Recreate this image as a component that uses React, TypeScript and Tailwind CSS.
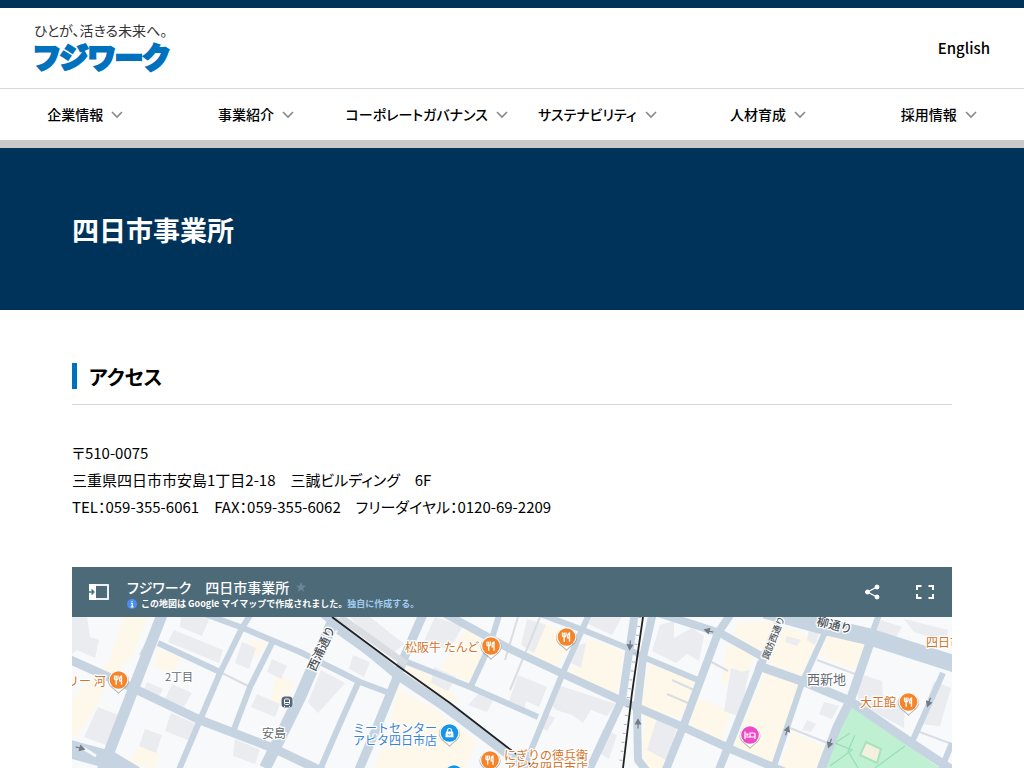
import type { ReactNode } from "react";

const navItems = ["企業情報", "事業紹介", "コーポレートガバナンス", "サステナビリティ", "人材育成", "採用情報"];

const majorRoads = [
  { d: "M335 617L300 697L265 768", w: 12 },
  { d: "M163 612L133 690L108 755L95 790", w: 11 },
  { d: "M66 748L110 760L135 775", w: 18 },
  { d: "M66 658L133 688L200 720L273 748L330 775", w: 9 },
  { d: "M320 610L398 675L443 705L530 770", w: 10 },
  { d: "M424 612L403 660L396 680L377 727L358 772", w: 9 },
  { d: "M765 610L827 627L870 637L955 664", w: 17 },
  { d: "M442 612L510 649L563 674L620 700L683 727L735 751L790 774", w: 8 },
  { d: "M783 612L760 667L733 735L718 772", w: 8 },
  { d: "M655 612L720 633L763 657", w: 8 },
  { d: "M756 665L807 683L850 701L910 742L955 772", w: 9 },
  { d: "M872 637L850 701L837 727L820 772", w: 9 },
  { d: "M732 612L718 633L683 727L665 772", w: 8 },
  { d: "M635 612L622 700L588 772", w: 8 },
  { d: "M653 612L643 657L637 710L638 760L650 775", w: 8 },
];

const minorRoads = [
  "M158 643L220 672",
  "M252 612L242 628L220 673L200 720L178 772",
  "M205 614L243 628L300 652L360 682L392 694",
  "M273 641L250 687L233 732",
  "M407 662L470 687L538 717",
  "M500 612L490 645L471 686",
  "M358 683L338 728L319 772",
  "M535 612L583 630L627 648L643 657L698 680",
  "M590 612L562 675L525 765",
  "M827 628L802 683L772 772",
  "M943 673L912 742",
  "M880 612L871 636",
  "M952 743L940 772",
  "M338 631L397 673",
];

const buildings = [
  "M72 617H87L90 637L99 640L95 658L77 650L72 654Z",
  "M174 630L223 650L219 663L168 642Z",
  "M181 617H210L202 636L180 627Z",
  "M147 682L163 689L158 698L143 691Z",
  "M172 684L192 693L184 707L165 699Z",
  "M171 713L196 724L190 741L165 731Z",
  "M145 729L162 735L156 753L139 746Z",
  "M98 707L126 718L109 746L84 737Z",
  "M242 642L256 648L249 669L235 663Z",
  "M257 694L280 704L275 717L251 707Z",
  "M272 659L287 666L281 679L267 672Z",
  "M235 739L260 750L255 764L233 756Z",
  "M321 670L345 683L330 700L318 713L308 702Z",
  "M353 655L370 662L364 677L349 669Z",
  "M350 617H370L404 644L391 655L372 641Z",
  "M435 617L463 626L449 650L424 641Z",
  "M434 667L456 677L448 691L431 683Z",
  "M480 692L495 697L487 712L468 705Z",
  "M527 619L546 625L534 653L521 645Z",
  "M518 675L547 687L539 707L526 701L524 711L508 704Z",
  "M555 684L616 704L607 716L591 710L583 723L572 715L556 710L549 702Z",
  "M591 617H622L612 635L588 624Z",
  "M577 645L586 643L581 668L571 663Z",
  "M544 712L555 718L547 731L539 726Z",
  "M603 729L617 735L609 759L594 750Z",
  "M660 625L674 621L674 638L692 628L704 636L699 661L687 654L676 663L652 651Z",
  "M731 668L748 674L741 717L724 711Z",
  "M657 718L677 727L668 761L647 750Z",
  "M787 636L801 640L797 646L785 642Z",
  "M810 625L821 629L815 645L807 640Z",
  "M864 675L882 681L883 695L905 702L904 728L859 704L857 691Z",
  "M881 620L902 627L896 637L871 630Z",
  "M904 619L948 630L947 642L914 632Z",
  "M807 720L816 724L811 732L802 730Z",
  "M824 702L839 706L832 719L819 714Z",
  "M934 681L951 688L940 726L919 724Z",
  "M730 674L750 670L739 705L730 713Z",
];

const yellowLots = [
  "M123 617L148 617L132 657L106 680L100 701L78 735L72 735L72 700L109 661Z",
  "M155 648L181 657L174 674L155 667Z",
  "M250 640L267 642L257 658L248 653Z",
  "M276 674L295 682L284 708L271 700Z",
  "M137 746L160 754L155 768L128 764Z",
  "M407 665L443 682L461 703L438 700L405 679Z",
  "M397 688L430 706L477 741L465 768L373 768L389 736Z",
  "M470 622L488 649L469 682L440 669Z",
  "M535 620L578 636L556 668L527 652Z",
  "M588 638L624 651L616 696L569 672Z",
  "M648 663L697 681L680 719L641 706Z",
  "M645 715L679 728L672 768H645L642 748Z",
  "M728 641L756 656L738 689L721 680Z",
  "M692 695L730 711L721 743L690 727Z",
  "M736 623L777 621L762 651L733 640Z",
  "M783 627L818 638L801 676L767 664Z",
  "M765 672L801 686L773 763L733 748Z",
  "M829 632L865 642L856 670L820 656Z",
  "M792 732L828 748L819 768H780Z",
];

function Chevron() {
  return (
    <svg className="h-2 w-3 shrink-0" viewBox="0 0 12 8" fill="none" stroke="#888" strokeWidth="1.6" aria-hidden="true">
      <path d="M1 1l5 5L11 1" />
    </svg>
  );
}

function Pin({ x, y, color, children }: { x: number; y: number; color: string; children: ReactNode }) {
  return (
    <g transform={`translate(${x} ${y})`}>
      <path d="M-10.5 1A10.5 10.5 0 1 1 10.5 1C10.5 7 4 9 0 14C-4 9-10.5 7-10.5 1Z" fill="#5f6368" opacity=".45" />
      <path d="M-10 0A10 10 0 1 1 10 0C10 6 4 8 0 12.5C-4 8-10 6-10 0Z" fill="#fff" />
      <circle r="8.8" fill={color} />
      {children}
    </g>
  );
}

function Food({ x, y }: { x: number; y: number }) {
  return (
    <Pin x={x} y={y} color="#f5842a">
      <path d="M-4-4.5V-1.5Q-4 0-2.3 0T-.5-1.5V-4.5M-2.3-4.5V4.7M3 4.7V-4Q1.2-3.5 1.2-1V.8H3" fill="none" stroke="#fff" strokeWidth="1.3" />
    </Pin>
  );
}

function Bag({ x, y }: { x: number; y: number }) {
  return (
    <Pin x={x} y={y} color="#1594ea">
      <path d="M-3.5-1.5H3.5L4.2 4.3H-4.2Z" fill="#fff" />
      <path d="M-2-1V-2.5A2 2 0 0 1 2-2.5V-1" fill="none" stroke="#fff" strokeWidth="1.1" />
      <path d="M-1.5.7A1.5 1.5 0 0 0 1.5.7" fill="none" stroke="#1594ea" strokeWidth=".8" />
    </Pin>
  );
}

function Arrow({ x, y, turn }: { x: number; y: number; turn: number }) {
  return (
    <path
      d="M-4.500 0H2M0-2.500L4.500 0L0 2.500Z"
      transform={`translate(${x} ${y}) rotate(${turn})`}
      fill="#747b84"
      stroke="#747b84"
      strokeWidth="1.2"
    />
  );
}

function AccessMap() {
  return (
    <svg className="block h-auto w-full bg-[#f8f9fb]" viewBox="72 617 880 151" role="img" aria-label="四日市事業所周辺の地図">
      <g fill="#fef8ea">
        {yellowLots.map((d) => <path key={d} d={d} />)}
      </g>
      <g fill="#eaecf0">
        {buildings.map((d) => <path key={d} d={d} />)}
      </g>
      <path d="M843 707Q848 704 855 709L910 747L940 768H825L837 728Z" fill="#bff0d2" />
      <path d="M866 742L881 749L877 763L860 755Z" fill="#f5f0dd" stroke="#a7e2c0" strokeWidth="2" />
      <path d="M905 746L875 768M850 733L835 743L852 750L830 766M858 768L848 751L855 735" fill="none" stroke="#98ddb9" strokeWidth="1.2" />
      <g fill="none" stroke="#dadde3" strokeWidth="2">
        <path d="M220 672L250 687M817 660L855 674M790 728L830 744M917 731L952 744M160 617L140 655M672 680L694 690M667 694L688 703M518 617L505 660M540 617L510 690M708 660L728 671" />
      </g>
      <g fill="none" stroke="#c6d4e2" strokeLinejoin="round">
        {minorRoads.map((d) => <path key={d} d={d} strokeWidth="6" />)}
        {majorRoads.map((r) => <path key={r.d} d={r.d} strokeWidth={r.w} />)}
      </g>
      <path d="M83 748L96 756" stroke="#f7f8fa" strokeWidth="3" />
      <path d="M340 617L406 664" stroke="#d9dde2" strokeWidth="7" />
      <g fill="none" stroke="#222" strokeWidth="1.8">
        <path d="M332 617L398 666L450 703L507 747L535 768" />
        <path d="M643 617L632 693L623 768" />
      </g>
      <path d="M640 617L629 693L620 768" fill="none" stroke="#aeb2b8" strokeWidth="3" strokeDasharray="1 8" />
      <Arrow x={80} y={748} turn={15} />
      <Arrow x={630} y={645} turn={95} />
      <Arrow x={638} y={724} turn={-90} />
      <Arrow x={709} y={631} turn={195} />
      <Arrow x={787} y={731} turn={-70} />
      <Arrow x={830} y={743} turn={110} />
      <Arrow x={929} y={702} turn={110} />
      <g stroke="#fff" strokeWidth="2.5" strokeLinejoin="round" paintOrder="stroke">
        <g fill="#666b73" fontSize="12">
          <text x="165" y="681" fontSize="11">2丁目</text>
          <text x="262" y="738">安島</text>
          <text x="807" y="684" fontSize="13">西新地</text>
        </g>
        <g fill="#4d535c" fontWeight="500">
          <text x="0" y="0" fontSize="12" transform="translate(315 672) rotate(-65)">西浦通り</text>
          <text x="0" y="0" fontSize="9" transform="translate(768 660) rotate(-68)">諏訪西通り</text>
          <text x="0" y="0" fontSize="12" transform="translate(816 625) rotate(14)">柳通り</text>
        </g>
        <g fill="#d27329" fontSize="12">
          <text x="405" y="652">松阪牛 たんど</text>
          <text x="67" y="686">リー 河</text>
          <text x="860" y="707">大正館</text>
          <text x="926" y="647">四日市</text>
          <text x="504" y="760">にぎりの徳兵衛</text>
          <text x="504" y="772">アピタ四日市店</text>
        </g>
        <g fill="#3b83d4" fontSize="12">
          <text x="353" y="733">ミートセンター</text>
          <text x="353" y="745">アピタ四日市店</text>
        </g>
      </g>
      <Food x={118.5} y={680} />
      <Food x={491} y={646} />
      <Food x={566.5} y={637} />
      <Food x={490} y={760} />
      <Food x={908.5} y={702} />
      <Bag x={449.5} y={733} />
      <Bag x={454} y={774} />
      <Pin x={750} y={735} color="#eb4bc4">
        <path d="M-5-3.5V4M-5 2H5V4M5 2V-1Q5-2 4-2H0V2" fill="none" stroke="#fff" strokeWidth="1.2" />
        <circle cx="-2.7" cy="-.5" r="1.2" fill="#fff" />
      </Pin>
      <circle cx="287" cy="702" r="6.5" fill="#fff" />
      <rect x="281.5" y="696.5" width="11" height="11" rx="3.5" fill="#53657b" />
      <rect x="284.5" y="699" width="5" height="5.5" rx="1" fill="none" stroke="#fff" />
      <path d="M285 702.500H289M285 706L284 707M289 706L290 707" stroke="#fff" />
    </svg>
  );
}

export default function App() {
  return (
    <div className="bg-white font-['Noto_Sans_CJK_JP',sans-serif] text-black" lang="ja">
      <header className="border-t-8 border-[#003359] [font-feature-settings:'palt']">
        <div className="flex h-20 items-center justify-between px-[34px]">
          <a href="#" className="block pb-1">
            <span className="block text-[14px] leading-5 whitespace-nowrap text-[#333]">ひとが、活きる未来へ。</span>
            <span className="block text-[29px] leading-8 font-black whitespace-nowrap text-[#0071bc] [-webkit-text-stroke:2px_#0071bc]">フジワーク</span>
          </a>
          <a href="#" className="text-[15px] leading-6 font-medium">English</a>
        </div>
        <nav className="border-t border-b-8 border-t-[#d8d8d8] border-b-[#c9c9c9]">
          <ul className="grid grid-cols-6">
            {navItems.map((item) => (
              <li key={item}>
                <a href="#" className="flex h-[51px] items-center justify-center gap-2 text-sm font-medium whitespace-nowrap">
                  <span className="pb-0.5">{item}</span>
                  <Chevron />
                </a>
              </li>
            ))}
          </ul>
        </nav>
      </header>

      <div className="flex h-[162px] items-center bg-[#003359] px-[72px] pt-0.5">
        <h1 className="text-[27px] leading-10 font-bold text-white">四日市事業所</h1>
      </div>

      <main className="px-[72px] pt-[53px]">
        <div className="border-b border-[#d8d8d8] pb-[15px] [font-feature-settings:'palt']">
          <h2 className="border-l-[5px] border-[#0071bc] pt-0.5 pl-3 text-xl leading-6 font-bold">アクセス</h2>
        </div>
        <address className="mt-[34px] text-[15px] leading-[27px] not-italic [font-feature-settings:'palt']">
          <p>〒510-0075</p>
          <p>三重県四日市市安島1丁目2-18　三誠ビルディング　6F</p>
          <p>TEL：059-355-6061　FAX：059-355-6062　フリーダイヤル：0120-69-2209</p>
        </address>

        <section className="mt-[47px]" aria-label="地図">
          <div className="flex h-[50px] items-center bg-[#4d6a79] pr-[18px] pl-[17px] text-white">
            <button type="button" aria-label="凡例を表示" className="mr-[18px]">
              <svg className="h-5 w-5" viewBox="0 0 20 20" aria-hidden="true">
                <rect x="1" y="3" width="18" height="14" fill="none" stroke="#fff" strokeWidth="1.8" />
                <path d="M0 2H7V18H0Z" fill="#fff" />
                <path d="M0 10H4M2.500 7.500L5 10L2.500 12.500" fill="none" stroke="#4d6a79" strokeWidth="1.400" />
              </svg>
            </button>
            <div className="flex flex-1 flex-col pt-1">
              <div className="flex items-center gap-1.5 text-[14px] leading-5 font-medium">
                <span className="[font-feature-settings:'palt']">フジワーク　四日市事業所</span>
                <svg className="h-3 w-3" viewBox="0 0 12 12" fill="#6b8694" aria-hidden="true">
                  <path d="M6 1L7.400 4.400L11 4.700L8.200 7.100L9.100 10.700L6 8.700L2.900 10.700L3.800 7.100L1 4.700L4.600 4.400Z" />
                </svg>
              </div>
              <p className="flex items-center text-[9px] leading-[14px] font-bold">
                <svg className="mr-1 h-2.5 w-2.5" viewBox="0 0 10 10" aria-hidden="true">
                  <circle cx="5" cy="5" r="5" fill="#4b8df8" />
                  <path d="M5 2V3.200M4 4.500H5.200V7.800M3.700 7.800H6.500" fill="none" stroke="#fff" strokeWidth="1.200" />
                </svg>
                この地図は Google マイマップで作成されました。
                <a href="#" className="text-[#a3cdf0]">独自に作成する。</a>
              </p>
            </div>
            <button type="button" aria-label="共有" className="mr-9">
              <svg className="h-4 w-4" viewBox="0 0 16 16" fill="#fff" stroke="#fff" aria-hidden="true">
                <path d="M13 3L3.500 8L13 13" fill="none" strokeWidth="1.400" />
                <circle cx="13" cy="3" r="2" />
                <circle cx="3.500" cy="8" r="2" />
                <circle cx="13" cy="13" r="2" />
              </svg>
            </button>
            <button type="button" aria-label="全画面表示">
              <svg className="h-[14px] w-[18px]" viewBox="0 0 18 14" fill="none" stroke="#fff" strokeWidth="2" aria-hidden="true">
                <path d="M1 5V1H5.500M12.500 1H17V5M17 9V13H12.500M5.500 13H1V9" />
              </svg>
            </button>
          </div>
          <AccessMap />
        </section>
      </main>
    </div>
  );
}
